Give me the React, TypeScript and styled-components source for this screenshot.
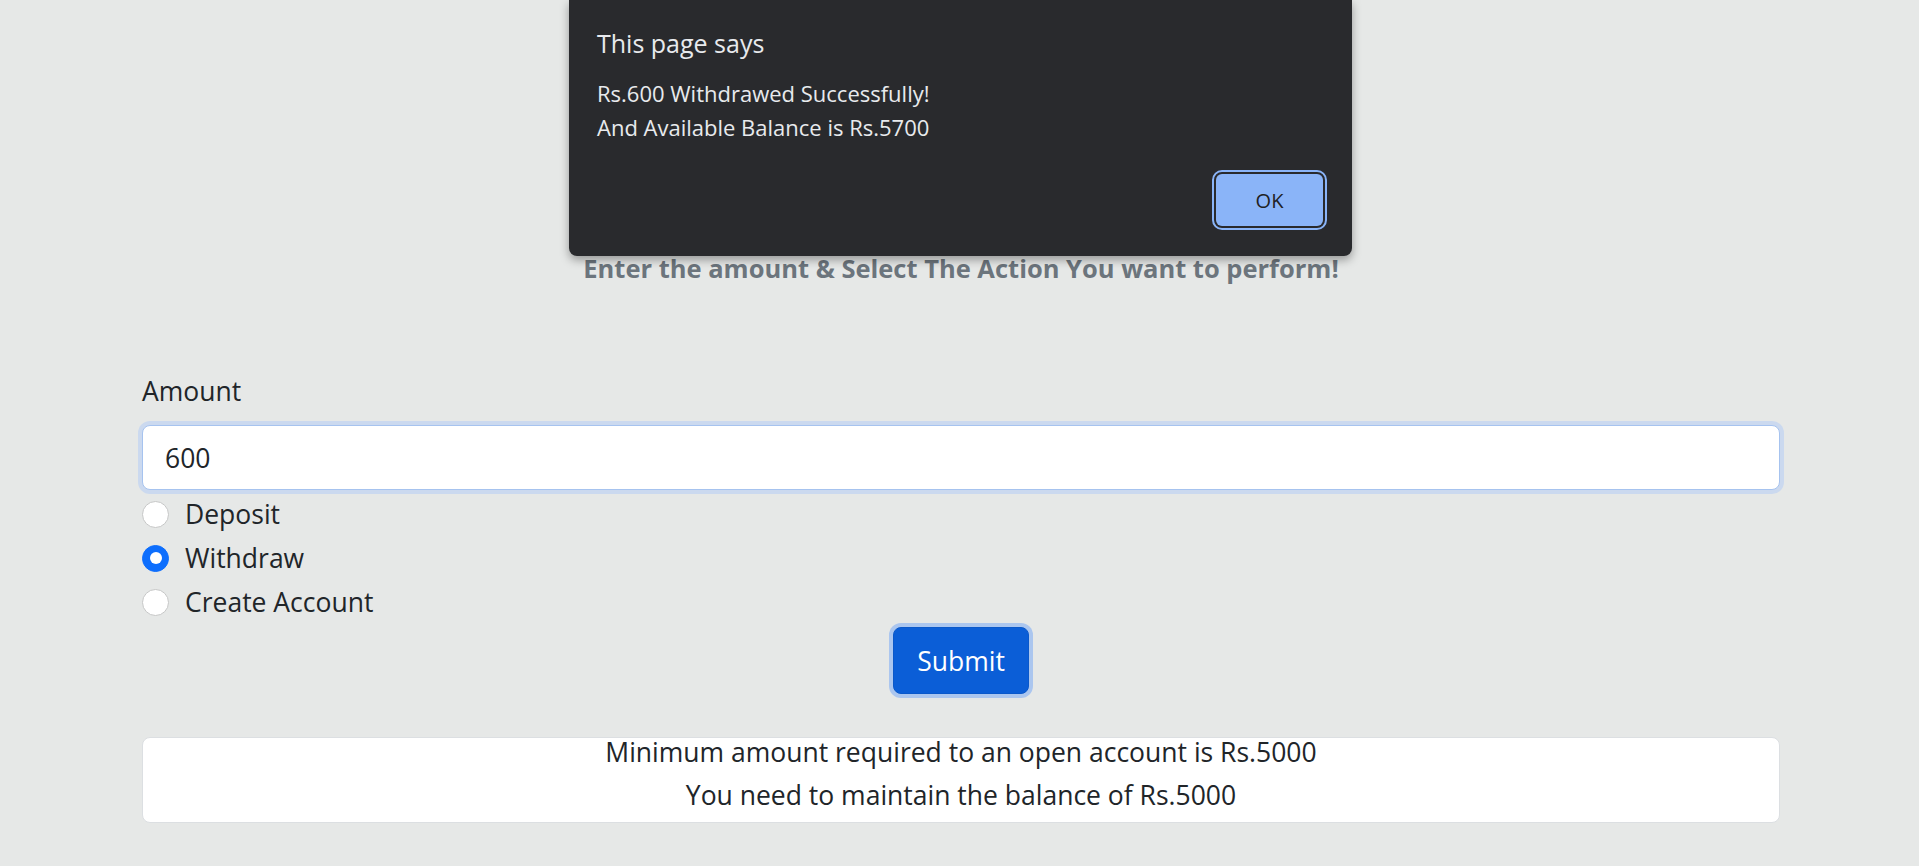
import React from "react";
import styled, { createGlobalStyle } from "styled-components";

const GlobalStyle = createGlobalStyle`
  html, body {
    margin: 0;
    padding: 0;
    background: #e6e8e7;
    font-family: "Open Sans", "Noto Sans", Arial, sans-serif;
    color: #212529;
  }
  * { box-sizing: border-box; }
`;

const Page = styled.div`
  position: relative;
  min-height: 866px;
  padding-top: 253px;
`;

const Container = styled.main`
  width: 1638px;
  margin: 0 0 0 142px;
  display: flex;
  flex-direction: column;
`;

const Heading = styled.h5`
  margin: 0;
  text-align: center;
  font-size: 25.5px;
  line-height: 30px;
  font-weight: 700;
  color: #6c757d;
`;

const Label = styled.label`
  margin-top: 88px;
  font-size: 26.5px;
  line-height: 40px;
  color: #212529;
`;

const AmountInput = styled.input`
  margin-top: 14px;
  height: 65px;
  width: 100%;
  padding: 0 22px;
  font-family: inherit;
  font-size: 26.5px;
  color: #212529;
  background: #ffffff;
  border: 1px solid #a6c3ef;
  border-radius: 8px;
  box-shadow: 0 0 0 4px #cbd9ef;
  outline: none;
`;

const RadioGroup = styled.div`
  margin-top: 2px;
  display: flex;
  flex-direction: column;
`;

const RadioRow = styled.label`
  height: 44px;
  display: flex;
  align-items: center;
  gap: 16px;
  font-size: 26.5px;
  color: #212529;
  cursor: pointer;
`;

const RadioDot = styled.span<{ $checked?: boolean }>`
  width: 27px;
  height: 27px;
  border-radius: 50%;
  flex: none;
  position: relative;
  background: ${(p) => (p.$checked ? "#0d6efd" : "#ffffff")};
  border: 1px solid ${(p) => (p.$checked ? "#0d6efd" : "#c6c7c7")};
  &::after {
    content: "";
    display: ${(p) => (p.$checked ? "block" : "none")};
    position: absolute;
    left: 50%;
    top: 50%;
    width: 12px;
    height: 12px;
    margin: -6px 0 0 -6px;
    border-radius: 50%;
    background: #ffffff;
  }
`;

const HiddenRadio = styled.input`
  position: absolute;
  opacity: 0;
  width: 0;
  height: 0;
  margin: 0;
`;

const SubmitRow = styled.div`
  margin-top: 3px;
  display: flex;
  justify-content: center;
`;

const SubmitButton = styled.button`
  height: 67px;
  padding: 0 23px;
  font-family: inherit;
  font-size: 26.5px;
  color: #ffffff;
  background: #0b5ed7;
  border: 1px solid #0a58ca;
  border-radius: 8px;
  box-shadow: 0 0 0 4px #abc6ef;
  cursor: pointer;
`;

const InfoBox = styled.div`
  margin-top: 43px;
  background: #ffffff;
  border: 1px solid #dcdfe2;
  border-radius: 8px;
  padding-bottom: 13px;
  text-align: center;
`;

const InfoLine = styled.div<{ $gap?: number }>`
  font-size: 26.5px;
  line-height: 28px;
  color: #212529;
  margin-bottom: ${(p) => p.$gap ?? 0}px;
`;

const Dialog = styled.div`
  position: absolute;
  top: 0;
  left: 569px;
  width: 783px;
  height: 256px;
  padding: 27px 29px 30px 28px;
  background: #292a2d;
  border-radius: 0 0 8px 8px;
  box-shadow: 0 4px 10px rgba(0, 0, 0, 0.35);
  display: flex;
  flex-direction: column;
  font-family: "Open Sans", "Noto Sans", Arial, sans-serif;
`;

const DialogTitle = styled.div`
  font-size: 25px;
  line-height: 32px;
  color: #e8eaed;
`;

const DialogMessage = styled.div`
  margin-top: 17px;
  font-size: 22px;
  line-height: 34px;
  color: #e8eaed;
`;

const DialogActions = styled.div`
  margin-top: 30px;
  display: flex;
  justify-content: flex-end;
`;

const OkButton = styled.button`
  width: 107px;
  height: 52px;
  font-family: inherit;
  font-size: 20px;
  color: #202124;
  background: #8ab4f8;
  border: none;
  border-radius: 6px;
  outline: 2px solid #8ab4f8;
  outline-offset: 2px;
  cursor: pointer;
`;

const options = [
  { label: "Deposit", value: "deposit" },
  { label: "Withdraw", value: "withdraw" },
  { label: "Create Account", value: "create" },
];

export default function App() {
  const [action, setAction] = React.useState("withdraw");
  const [amount, setAmount] = React.useState("600");

  return (
    <>
      <GlobalStyle />
      <Page>
        <Container>
          <Heading>Enter the amount &amp; Select The Action You want to perform!</Heading>
          <Label htmlFor="amount">Amount</Label>
          <AmountInput
            id="amount"
            type="text"
            value={amount}
            onChange={(e) => setAmount(e.target.value)}
          />
          <RadioGroup>
            {options.map((o) => (
              <RadioRow key={o.value}>
                <HiddenRadio
                  type="radio"
                  name="action"
                  value={o.value}
                  checked={action === o.value}
                  onChange={() => setAction(o.value)}
                />
                <RadioDot $checked={action === o.value} />
                {o.label}
              </RadioRow>
            ))}
          </RadioGroup>
          <SubmitRow>
            <SubmitButton type="button">Submit</SubmitButton>
          </SubmitRow>
          <InfoBox>
            <InfoLine $gap={15}>Minimum amount required to an open account is Rs.5000</InfoLine>
            <InfoLine>You need to maintain the balance of Rs.5000</InfoLine>
          </InfoBox>
        </Container>
        <Dialog role="alertdialog">
          <DialogTitle>This page says</DialogTitle>
          <DialogMessage>
            Rs.600 Withdrawed Successfully!
            <br />
            And Available Balance is Rs.5700
          </DialogMessage>
          <DialogActions>
            <OkButton type="button">OK</OkButton>
          </DialogActions>
        </Dialog>
      </Page>
    </>
  );
}
